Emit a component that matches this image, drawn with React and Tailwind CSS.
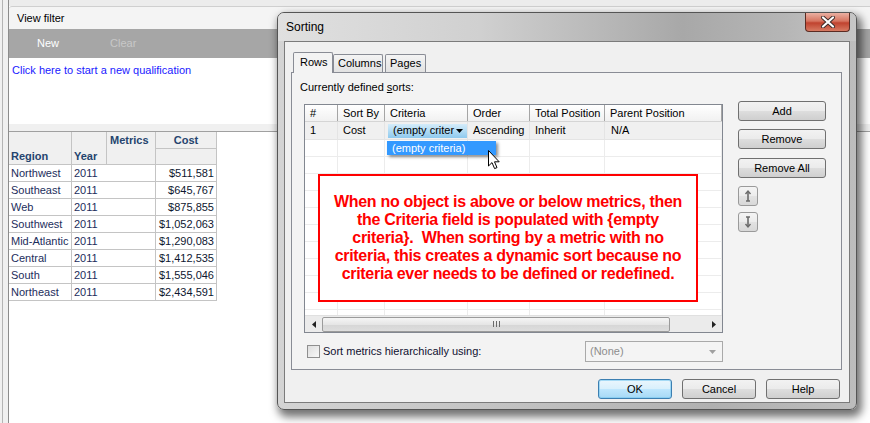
import React from 'react';

const ui = "font-['Liberation_Sans',Arial,sans-serif]";

const regionRows = [
  ['Northwest', '$511,581'],
  ['Southeast', '$645,767'],
  ['Web', '$875,855'],
  ['Southwest', '$1,052,063'],
  ['Mid-Atlantic', '$1,290,083'],
  ['Central', '$1,412,535'],
  ['South', '$1,555,046'],
  ['Northeast', '$2,434,591'],
];

const noteLines = [
  'When no object is above or below metrics, then',
  'the Criteria field is populated with {empty',
  'criteria}.  When sorting by a metric with no',
  'criteria, this creates a dynamic sort because no',
  'criteria ever needs to be defined or redefined.',
];

// column widths of the sort list (last one takes the rest)
const sortCols = ['w-[33px]', 'w-[47px]', 'w-[83px]', 'w-[62px]', 'w-[75px]', 'flex-1'];

function ReportGrid() {
  const head = 'bg-[#f0f0f0] border-r border-b border-[#c4c4c4] font-bold text-[#25446e] flex';
  const cell = 'border-r border-b border-[#c4c4c4] flex items-center';
  return (
    <div className="grid grid-cols-[63px_35px_49px_61px] grid-rows-[17px_16px_repeat(8,17px)] w-fit text-[11px]">
      <div className={`${head} row-span-2 items-end pl-[2px] pb-[1px]`}>Region</div>
      <div className={`${head} row-span-2 items-end pl-[2px] pb-[1px]`}>Year</div>
      <div className={`${head} row-span-2 items-start pl-[3px] pt-[2px]`}>Metrics</div>
      <div className={`${head} items-center justify-center`}>Cost</div>
      <div className={`${head} col-start-4`} />
      {regionRows.map(([region, cost]) => (
        <React.Fragment key={region}>
          <div className={`${cell} pl-[2px] text-[#1c2d5c]`}>{region}</div>
          <div className={`${cell} col-span-2 pl-[2px] text-[#1c2d5c]`}>2011</div>
          <div className={`${cell} justify-end pr-[2px] text-[#0e1630]`}>{cost}</div>
        </React.Fragment>
      ))}
    </div>
  );
}

function WinButton({ children, className = '' }) {
  return (
    <div
      className={`flex items-center justify-center rounded-[3px] border border-[#707070] bg-[linear-gradient(#f2f2f2,#ebebeb_48%,#dddddd_52%,#cfcfcf)] text-[11px] text-black ${className}`}
    >
      {children}
    </div>
  );
}

function CloseButton() {
  return (
    <div className="mr-[6px] w-[45px] h-[19px] flex items-center justify-center rounded-b-[4px] border border-t-0 border-[#5b2b22] bg-[linear-gradient(#eab0a2,#d67460_45%,#c0432f_55%,#d77a62)]">
      <svg width="16" height="12" viewBox="0 0 16 12">
        <path d="M3 1.5 L13 10.5 M13 1.5 L3 10.5" stroke="#3a2a28" strokeWidth="4" strokeLinecap="round" />
        <path d="M3 1.5 L13 10.5 M13 1.5 L3 10.5" stroke="#ffffff" strokeWidth="2.2" strokeLinecap="round" />
      </svg>
    </div>
  );
}

function MoveButton({ down }) {
  return (
    <div className="w-[20px] h-[20px] flex items-center justify-center rounded-[3px] border border-[#9a9a9a] bg-[linear-gradient(#f4f4f4,#ececec_48%,#e2e2e2_52%,#d8d8d8)]">
      <svg width="10" height="14" viewBox="0 0 10 14" className={down ? 'rotate-180' : ''}>
        <path d="M5 2 L5 12 M3 12 L7 12" stroke="#6b6b6b" strokeWidth="1.6" />
        <path d="M2.5 5 L5 2 L7.5 5" stroke="#6b6b6b" strokeWidth="1.4" fill="none" />
      </svg>
    </div>
  );
}

function SortList() {
  const headers = ['#', 'Sort By', 'Criteria', 'Order', 'Total Position', 'Parent Position'];
  return (
    <div className="relative ml-[4px] w-[419px] h-[229px] flex flex-col border border-[#828790] bg-white overflow-hidden">
      <div className="h-[17px] flex bg-[linear-gradient(#ffffff,#f1f1f1)] border-b border-[#d5d5d5]">
        {headers.map((h, i) => (
          <div key={h} className={`${sortCols[i]} h-full flex items-center pl-[5px] border-r border-[#a5a5a5] whitespace-nowrap overflow-hidden`}>
            {h}
          </div>
        ))}
      </div>
      <div className="flex-1 overflow-hidden">
        <div className="h-[18px] flex bg-[#f0f0f0] border-b border-[#e4e4e4]">
          <div className={`${sortCols[0]} flex items-center pl-[5px] border-r border-[#e4e4e4]`}>1</div>
          <div className={`${sortCols[1]} flex items-center pl-[5px] border-r border-[#e4e4e4]`}>Cost</div>
          <div className={`${sortCols[2]} flex items-center pl-[3px] border-r border-[#e4e4e4]`}>
            <div className="w-[79px] h-[14px] flex items-center justify-between pl-[5px] pr-[4px] bg-[linear-gradient(#d4ecfa,#8fcaee)]">
              <span className="whitespace-nowrap">(empty criter</span>
              <svg width="7" height="4" viewBox="0 0 7 4">
                <path d="M0 0 L7 0 L3.5 4 Z" fill="#000" />
              </svg>
            </div>
          </div>
          <div className={`${sortCols[3]} flex items-center pl-[5px] border-r border-[#e4e4e4]`}>Ascending</div>
          <div className={`${sortCols[4]} flex items-center pl-[5px] border-r border-[#e4e4e4]`}>Inherit</div>
          <div className={`${sortCols[5]} flex items-center pl-[6px]`}>N/A</div>
        </div>
        {Array.from({ length: 11 }).map((_, r) => (
          <div key={r} className="h-[17px] flex border-b border-[#ececec]">
            {sortCols.map((w, i) => (
              <div key={i} className={`${w} h-full border-r border-[#ececec]`} />
            ))}
          </div>
        ))}
      </div>
      {/* horizontal scroll bar */}
      <div className="h-[17px] flex items-center bg-[#ebebeb] border-t border-[#e0e0e0]">
        <div className="w-[17px] h-full flex items-center justify-center">
          <svg width="4" height="7" viewBox="0 0 4 7">
            <path d="M4 0 L4 7 L0 3.5 Z" fill="#222" />
          </svg>
        </div>
        <div className="w-[348px] h-[15px] flex items-center justify-center gap-[2px] rounded-[2px] border border-[#9b9b9b] bg-[linear-gradient(#f5f5f5,#e6e6e6_50%,#d6d6d6_52%,#dedede)]">
          <span className="w-[1px] h-[6px] bg-[#6a6a6a]" />
          <span className="w-[1px] h-[6px] bg-[#6a6a6a]" />
          <span className="w-[1px] h-[6px] bg-[#6a6a6a]" />
        </div>
        <div className="flex-1" />
        <div className="w-[17px] h-full flex items-center justify-center">
          <svg width="4" height="7" viewBox="0 0 4 7">
            <path d="M0 0 L0 7 L4 3.5 Z" fill="#222" />
          </svg>
        </div>
      </div>

      {/* open criteria drop-down */}
      <div className="absolute left-[82px] top-[36px] w-[109px] h-[14px] flex items-center pl-[5px] bg-[#3399ff] text-white shadow-[2px_2px_3px_rgba(0,0,0,0.45)]">
        (empty criteria)
      </div>

      {/* annotation */}
      <div className="absolute left-[13px] top-[69px] w-[380px] h-[128px] flex flex-col items-center justify-center border-2 border-[#ff0000] bg-white text-[#ff0000] font-bold text-[16px] leading-[18px] tracking-[-0.3px]">
        {noteLines.map((l) => (
          <div key={l} className="whitespace-pre">{l}</div>
        ))}
      </div>

      {/* mouse pointer */}
      <svg className="absolute left-[183px] top-[45px]" width="13" height="20" viewBox="0 0 13 20">
        <path d="M0.5 0.5 L0.5 16 L4 12.6 L6.6 18.6 L9 17.6 L6.5 11.8 L11.2 11.8 Z" fill="#fff" stroke="#000" strokeWidth="1" strokeLinejoin="round" />
      </svg>
    </div>
  );
}

function SortingDialog() {
  return (
    <div className="absolute left-[277px] top-[12px] w-[580px] h-[398px] flex flex-col rounded-[7px] border border-[#555] bg-[linear-gradient(to_right,#d4d4d4,#c2c2c2_40%,#b0b0b0_75%,#bdbdbd)] shadow-[3px_5px_9px_2px_rgba(0,0,0,0.55)]">
      <div className="h-[28px] flex items-start justify-between rounded-t-[6px] bg-[linear-gradient(to_right,#e0e0e0,#d0d0d0_35%,#a8a8a8_70%,#b6b6b6_88%,#c6c6c6)]">
        <span className="pl-[8px] pt-[8px] text-[12px] leading-[13px] text-black">Sorting</span>
        <CloseButton />
      </div>

      <div className="mx-[6px] mb-[6px] flex-1 flex flex-col border border-[#7b7b7b] bg-[#f0f0f0] pt-[10px] pl-[6px] pr-[7px]">
        {/* tabs */}
        <div className="h-[20px] flex items-end pl-[2px]">
          <div className="relative z-10 -mb-px w-[40px] h-[21px] pl-[6px] pt-[3px] border border-b-0 border-[#898c95] rounded-t-[2px] bg-[#f3f3f3]">
            Rows
          </div>
          <div className="w-[50px] h-[18px] pl-[4px] pt-[2px] border border-b-0 border-[#898c95] rounded-t-[2px] bg-[linear-gradient(#f4f4f4,#e2e2e2)]">
            Columns
          </div>
          <div className="ml-[2px] w-[41px] h-[18px] pl-[4px] pt-[2px] border border-b-0 border-[#898c95] rounded-t-[2px] bg-[linear-gradient(#f4f4f4,#e2e2e2)]">
            Pages
          </div>
        </div>

        {/* tab page */}
        <div className="h-[298px] flex flex-col border border-[#898c95] bg-[#f3f3f3] pl-[8px] pt-[8px]">
          <div className="h-[13px]">
            Currently defined <span className="underline">s</span>orts:
          </div>
          <div className="mt-[10px] flex items-start">
            <SortList />
            <div className="ml-[15px] -mt-[3px] flex flex-col">
              <WinButton className="w-[88px] h-[20px]">Add</WinButton>
              <WinButton className="mt-[8px] w-[88px] h-[20px]">Remove</WinButton>
              <WinButton className="mt-[9px] w-[88px] h-[20px]">Remove All</WinButton>
              <div className="mt-[8px]">
                <MoveButton />
              </div>
              <div className="mt-[6px]">
                <MoveButton down />
              </div>
            </div>
          </div>
          <div className="mt-[8px] w-[423px] h-[21px] flex items-center justify-between">
            <div className="flex items-center">
              <span className="ml-[7px] w-[13px] h-[13px] border border-[#8f8f8f] bg-[linear-gradient(135deg,#dedede,#f8f8f8)]" />
              <span className="ml-[3px] text-[#101030]">Sort metrics hierarchically using:</span>
            </div>
            <div className="w-[138px] h-[21px] flex items-center justify-between pl-[4px] pr-[6px] border border-[#a9a9a9] bg-[#f4f4f4] text-[#8d8d8d]">
              <span>(None)</span>
              <svg width="7" height="4" viewBox="0 0 7 4">
                <path d="M0 0 L7 0 L3.5 4 Z" fill="#a0a0a0" />
              </svg>
            </div>
          </div>
        </div>

        {/* dialog buttons */}
        <div className="mt-[9px] pr-[2px] flex justify-end gap-[10px]">
          <div className="w-[74px] h-[20px] flex items-center justify-center rounded-[3px] border border-[#3c7fb1] bg-[linear-gradient(#eaf6fd,#d9f0fc_48%,#bee6fd_52%,#a7d9f5)] shadow-[inset_0_0_0_1px_rgba(120,200,240,0.6)]">
            OK
          </div>
          <WinButton className="w-[74px] h-[20px]">Cancel</WinButton>
          <WinButton className="w-[74px] h-[20px]">Help</WinButton>
        </div>
      </div>
    </div>
  );
}

export default function App() {
  return (
    <div className={`relative w-[870px] h-[423px] overflow-hidden bg-white ${ui} text-[11px] leading-[13px] text-black`}>
      <div className="flex h-full">
        {/* left gutter */}
        <div className="w-[9px] h-full pl-[2px] bg-[#f0f0f0] border-r border-[#8c8c8c]">
          <div className="h-full border-l border-[#b4b4b4]" />
        </div>

        <div className="flex-1 flex flex-col">
          <div className="h-[6px] bg-[#ececec]" />
          <div className="h-[23px] flex items-center pl-[8px] bg-[#f4f4f4] border-t border-[#cfcfcf] rounded-tl-[3px]">
            View filter
          </div>
          <div className="h-[29px] flex items-center bg-[#a6a6a6]">
            <span className="ml-[28px] text-white">New</span>
            <span className="ml-[51px] text-[#c8c8c8]">Clear</span>
          </div>
          <div className="h-[66px] bg-white pt-[6px] pl-[3px] text-[#1a1aff]">
            Click here to start a new qualification
          </div>
          <div className="h-[8px] bg-[#f0f0f0] border-b border-[#a0a0a0]" />
          <ReportGrid />
        </div>
      </div>

      <SortingDialog />
    </div>
  );
}
